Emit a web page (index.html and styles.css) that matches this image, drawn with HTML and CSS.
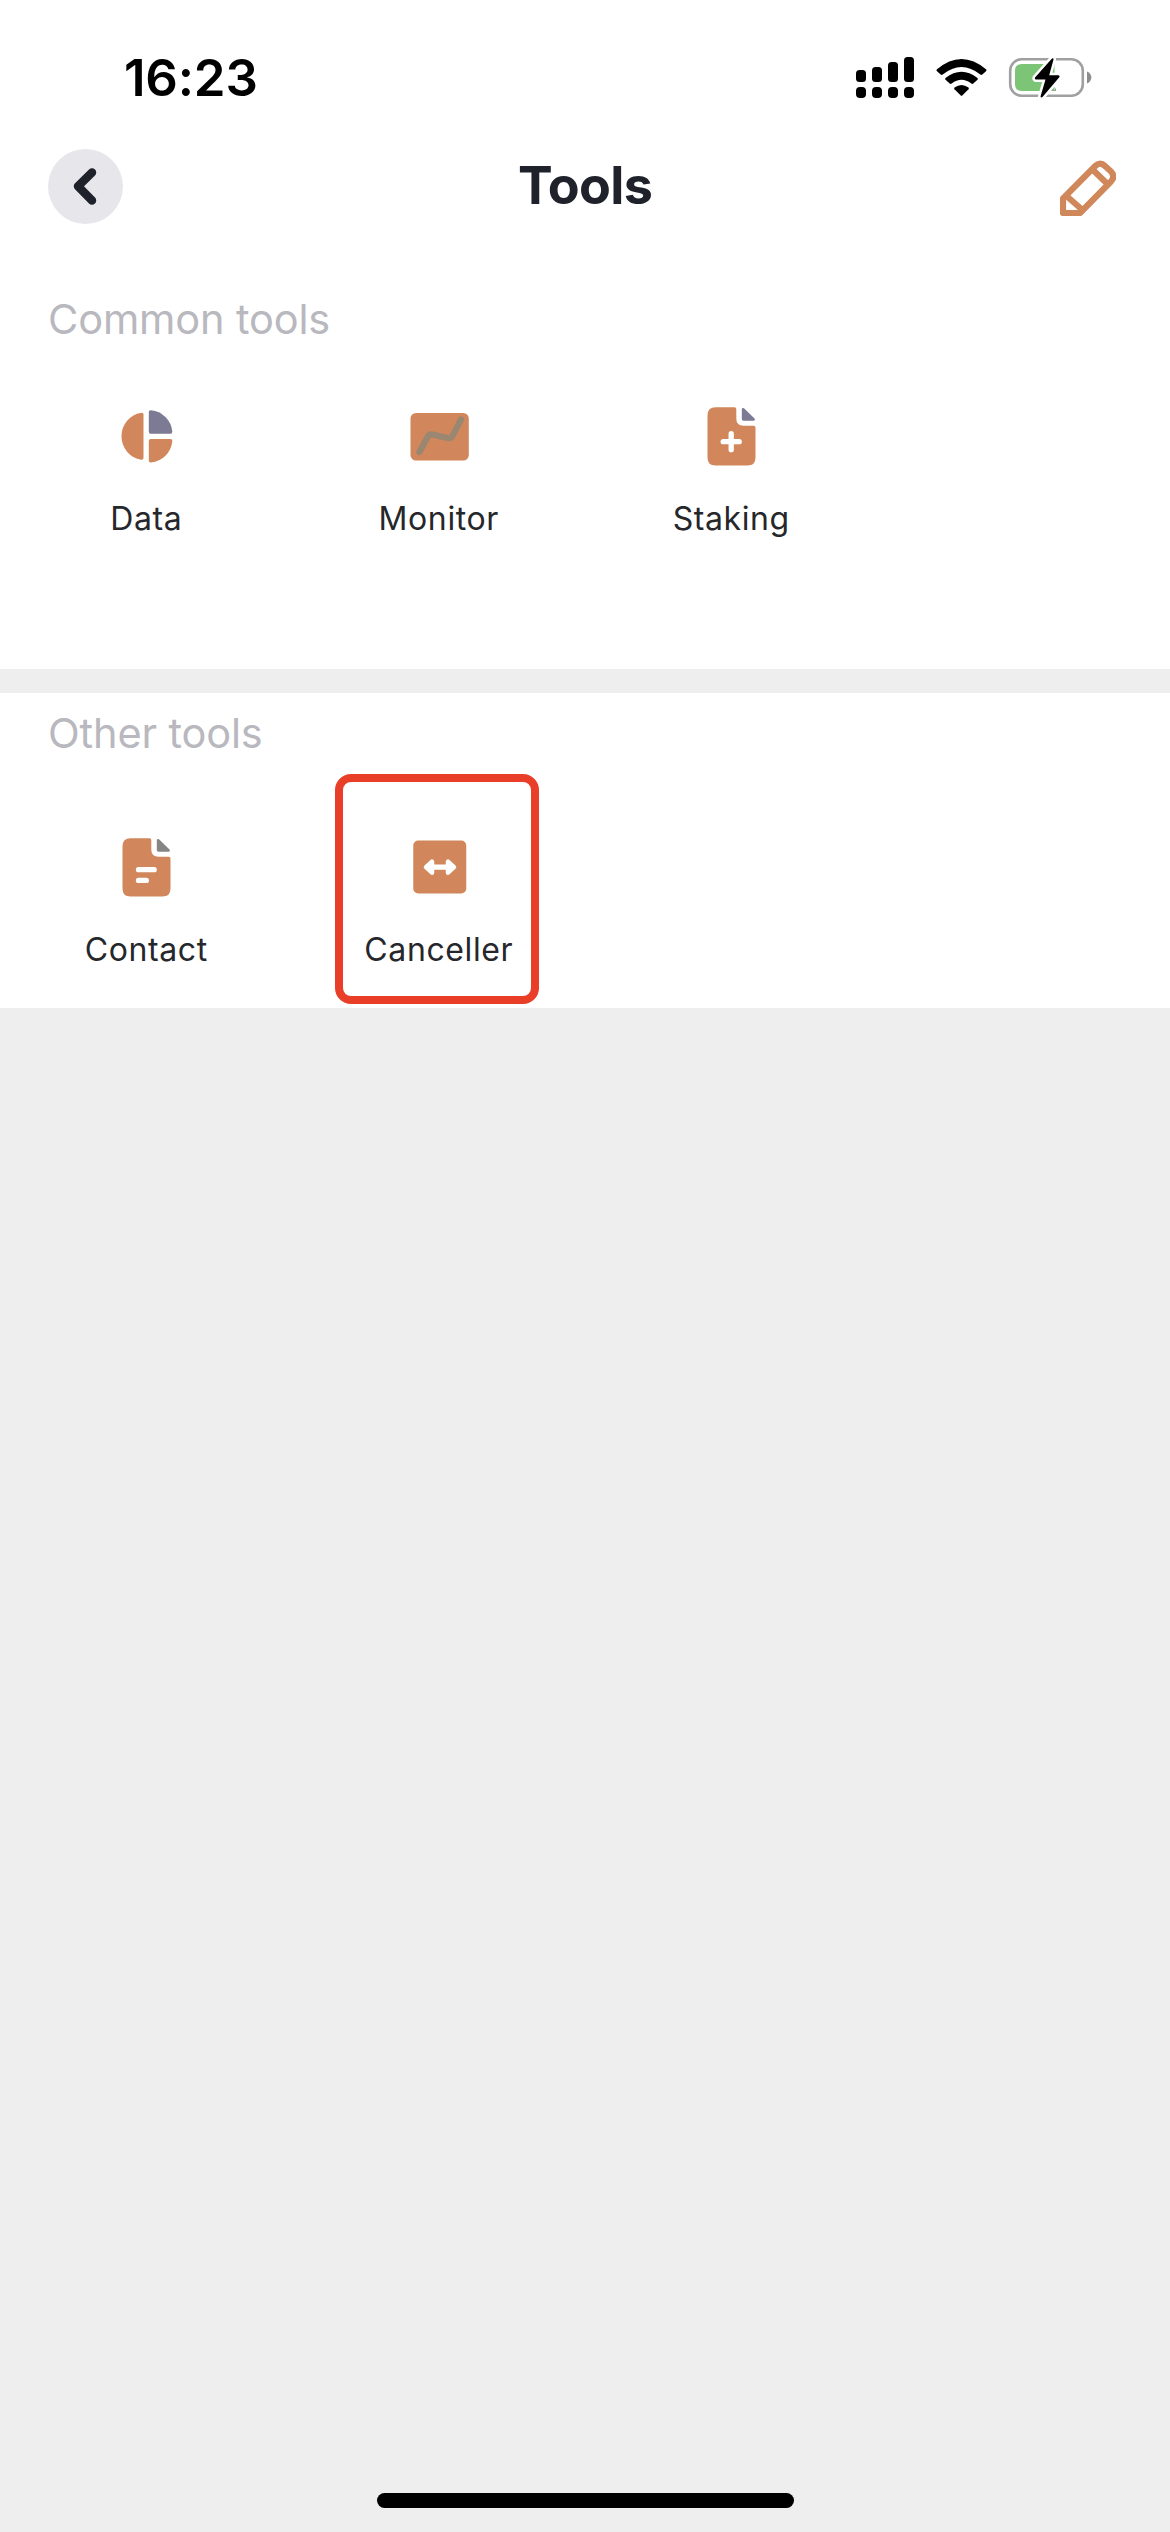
FILE: index.html
```html
<!DOCTYPE html>
<html lang="en">
<head>
<meta charset="utf-8">
<title>Tools</title>
<link rel="stylesheet" href="styles.css">
</head>
<body>
<div class="screen">
  <div class="status-bar">
    <span class="time">16:23</span>
    <svg class="status-icons" width="240" height="50" viewBox="852 52 240 50">
      <g>
        <rect x="856" y="70" width="10" height="12" rx="3.5"/><rect x="872" y="67" width="10" height="15" rx="3.5"/>
        <rect x="888" y="62" width="10" height="20" rx="3.5"/><rect x="904" y="57" width="10" height="25" rx="3.5"/>
        <rect x="856" y="87" width="10" height="11" rx="4"/><rect x="872" y="87" width="10" height="11" rx="4"/>
        <rect x="888" y="87" width="10" height="11" rx="4"/><rect x="904" y="87" width="10" height="11" rx="4"/>
      </g>
      <g>
        <path d="M937 69.3Q961.5 48.700 986 69.300Q987 70.300 986 71.300L982.300 74.500Q981.300 75.300 980.300 74.500Q961.500 59.500 942.700 74.500Q941.700 75.300 940.700 74.500L937 71.300Q936 70.300 937 69.300Z"/>
        <path d="M945.500 78Q961.500 65.500 977.500 78Q978.300 79 977.500 79.800L973.300 83.500Q972.300 84.300 971.300 83.500Q961.500 76 951.700 83.500Q950.700 84.300 949.700 83.500L945.500 79.800Q944.700 79 945.500 78Z"/>
        <path d="M954.500 87.500Q961.500 82.300 968.500 87.500Q969.300 88.400 968.500 89.200L962.500 95.200Q961.500 96.200 960.500 95.200L954.500 89.200Q953.700 88.400 954.500 87.500Z"/>
      </g>
      <rect x="1010.200" y="59.200" width="72.600" height="36.600" rx="11.500" fill="#fff" stroke="#a0a0a0" stroke-width="2.600"/>
      <path d="M1087 71.500Q1091.300 73.500 1091.300 77.400T1087 83.500Z" fill="#8c8c8c"/>
      <path d="M1022 64H1054.500V91H1022Q1015 91 1015 84V71Q1015 64 1022 64Z" fill="#7dc576"/>
      <path d="M1056 87.500V91H1051Q1055 90.500 1056 87.500Z" fill="#a0a0a0"/>
      <path class="bolt" d="M1052 58.500L1035 77.500Q1034.200 79.500 1036 79.500H1045.500L1040.500 96.500Q1041 98 1042.500 97L1059.500 77Q1060 75.200 1058.300 75.200H1049.200L1053.600 59.300Q1053.400 57.700 1052 58.500Z"/>
    </svg>
  </div>

  <header class="nav">
    <button class="back" aria-label="Back">
      <svg width="30" height="40" viewBox="0 0 30 40"><path d="M21 6.500L7 20.300L21 34.500"/></svg>
    </button>
    <h1>Tools</h1>
    <svg class="edit" width="56" height="56" viewBox="0 0 56 56">
      <path d="M3 53V38.500L35 6.200Q40 1 45 6L51 11.500Q55.500 16.500 51 21.500L20 53Z"/>
      <path d="M6.500 36L22.500 50M32.500 9.500L48 24.500"/>
    </svg>
  </header>

  <section class="group common">
    <h2>Common tools</h2>
    <div class="grid">
      <div class="tool">
        <svg width="72" height="72" viewBox="0 0 72 72">
          <g class="accent"><path d="M33.500 13.500V57Q33.500 59 31.300 58.800A23.900 23.900 0 0 1 31.300 11.700Q33.500 11.500 33.500 13.500Z"/>
          <path d="M40.700 38H60.500Q62.500 38 62.300 40.200A23.700 23.700 0 0 1 41 61.500Q38.800 61.700 38.800 59.700V40Q38.800 38 40.700 38Z"/></g>
          <path class="slate" d="M40.700 32.700H60.500Q62.500 32.700 62.300 30.500A23.700 23.700 0 0 0 41 9.200Q38.800 9 38.800 11V30.700Q38.800 32.700 40.700 32.700Z"/>
        </svg>
        <span>Data</span>
      </div>
      <div class="tool">
        <svg width="72" height="72" viewBox="0 0 72 72">
          <rect class="accent" x="7.500" y="12" width="58.300" height="47.500" rx="5.500"/>
          <path class="trend" d="M16.500 51L24.500 36Q26 33 29.500 33.500L44.500 37Q48 37.800 49.500 34.800L58 18.500"/>
        </svg>
        <span>Monitor</span>
      </div>
      <div class="tool">
        <svg width="72" height="72" viewBox="0 0 72 72">
          <path class="accent" d="M20.500 6.300H39.500Q41.300 6.300 41.300 8V17.500Q41.300 24.700 48.500 24.700H58.500Q60.500 24.700 60.500 26.500V56.500Q60.500 64.600 52.500 64.600H20.500Q12.500 64.600 12.500 56.500V14.500Q12.500 6.300 20.500 6.300Z"/>
          <path class="slate" d="M46.800 8.500Q46.800 6.500 49 7.300L59.500 17.500Q60.500 19.700 58.500 19.700H48.500Q46.800 19.700 46.800 18Z"/>
          <path class="mark" d="M28.200 40.700H44.200M36.200 32.700V48.700"/>
        </svg>
        <span>Staking</span>
      </div>
    </div>
  </section>

  <section class="group other">
    <h2>Other tools</h2>
    <div class="grid">
      <div class="tool">
        <svg width="72" height="72" viewBox="0 0 72 72">
          <path class="accent" d="M20.500 6.300H39.500Q41.300 6.300 41.300 8V17.500Q41.300 24.700 48.500 24.700H58.500Q60.500 24.700 60.500 26.500V56.500Q60.500 64.600 52.500 64.600H20.500Q12.500 64.600 12.500 56.500V14.500Q12.500 6.300 20.500 6.300Z"/>
          <path class="gray" d="M46.800 8.500Q46.800 6.500 49 7.300L59.500 17.500Q60.500 19.700 58.500 19.700H48.500Q46.800 19.700 46.800 18Z"/>
          <path class="mark" d="M28.500 37.700H44.200M28.500 48.400H36.300"/>
        </svg>
        <span>Contact</span>
      </div>
      <div class="tool selected">
        <svg width="72" height="72" viewBox="0 0 72 72">
          <rect class="accent" x="10.250" y="8.500" width="53" height="53" rx="5"/>
          <path class="mark" d="M27 35.200H47"/>
          <path class="heads" d="M23 35.200L29 29.700V40.700ZM51 35.200L45 29.700V40.700Z"/>
        </svg>
        <span>Canceller</span>
      </div>
    </div>
  </section>

  <div class="home-indicator"></div>
</div>
</body>
</html>
```
FILE: styles.css
```css
*, *::after { box-sizing: border-box; }
body { margin: 0; background: #eee; font-family: Inter, "Liberation Sans", sans-serif; }
h1, h2 { margin: 0; }
svg { display: block; flex: none; }

.screen {
  width: 1170px;
  height: 2532px;
  display: flex;
  flex-direction: column;
  background: #eee;
}

.status-bar {
  height: 140px;
  padding: 52px 78px 0 124px;
  display: flex;
  justify-content: space-between;
  align-items: flex-start;
  background: #fff;
}
.time { font-size: 51px; line-height: 52px; font-weight: 600; letter-spacing: -0.2px; color: #000; }
.bolt { stroke: #fff; stroke-width: 5px; paint-order: stroke; }

.nav {
  height: 92px;
  padding: 0 54px 0 48px;
  display: grid;
  grid-template-columns: 75px 1fr 56px;
  align-items: center;
  background: #fff;
}
.back {
  width: 75px;
  height: 75px;
  padding: 0;
  border: 0;
  border-radius: 50%;
  background: #e7e7eb;
  display: flex;
  align-items: center;
  justify-content: center;
}
.back path { fill: none; stroke: #20222b; stroke-width: 8.5px; stroke-linecap: round; stroke-linejoin: round; }
.nav h1 { text-align: center; font-size: 52px; line-height: 64px; font-weight: 700; letter-spacing: -0.7px; color: #20222b; padding-right: 13px; }
.edit { margin-top: 3px; fill: none; stroke: #d08759; stroke-width: 6.2px; stroke-linejoin: round; }

.group { background: #fff; }
.common { height: 437px; padding-top: 62px; }
.other { height: 315px; margin-top: 24px; padding-top: 15px; }
.group h2 { padding-left: 48px; font-size: 41.500px; line-height: 50px; font-weight: 400; letter-spacing: -0.15px; color: #b8b8be; }
.grid { display: grid; grid-template-columns: repeat(4, 1fr); }
.common .grid { padding-top: 57px; }
.other .grid { padding-top: 74px; }
.tool { position: relative; display: flex; flex-direction: column; align-items: center; gap: 26px; }
.tool span { font-size: 32px; line-height: 40px; letter-spacing: 0.6px; color: #26272b; }
.selected::after {
  content: "";
  position: absolute;
  left: 42px;
  top: -58px;
  width: 204px;
  height: 230px;
  border: 8.500px solid #e93f28;
  border-radius: 16px;
}

.accent { fill: #d1875b; }
.slate { fill: #7c7a94; }
.gray { fill: #858585; }
.trend { fill: none; stroke: #9a8771; stroke-width: 6.200px; stroke-linecap: round; }
.mark { fill: none; stroke: #fff; stroke-width: 5.300px; stroke-linecap: round; }
.heads { fill: #fff; stroke: #fff; stroke-width: 4.500px; stroke-linejoin: round; }

.home-indicator { width: 417px; height: 15px; margin: auto auto 24px; border-radius: 8px; background: #000; }
```
